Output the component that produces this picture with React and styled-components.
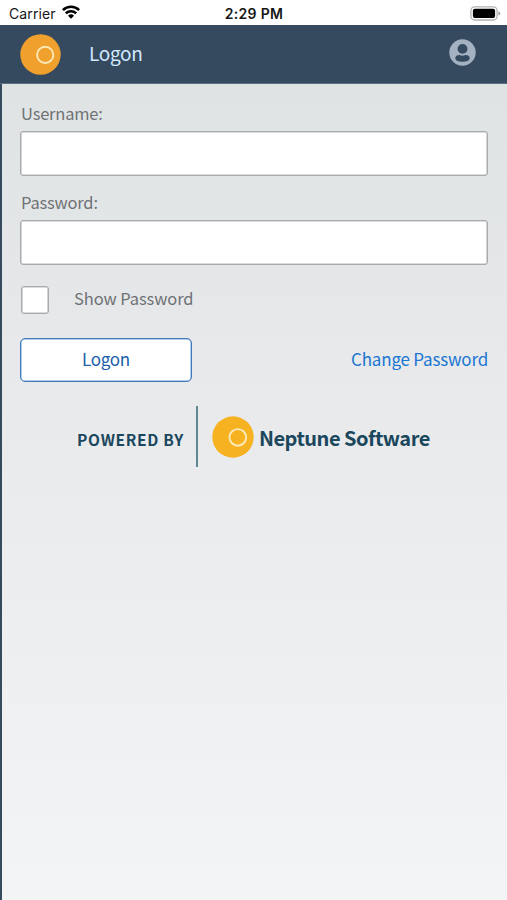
import React from "react";
import styled, { createGlobalStyle } from "styled-components";

const Logo = ({ size, color }) => (
  <svg width={size} height={size} viewBox="0 0 42 42">
    <circle cx="21" cy="21" r="20.7" fill={color} />
    <circle
      cx="25.8"
      cy="21.4"
      r="8.3"
      fill="none"
      stroke="#fdeaba"
      strokeWidth="1.9"
    />
  </svg>
);

const Wifi = () => (
  <svg width="18" height="14" viewBox="0 0 18 14">
    <g fill="none" stroke="#000" strokeWidth="2.5">
      <path d="M0.9 5.2a11.5 11.5 0 0 1 16.2 0" />
      <path d="M3.8 8.3a7.4 7.4 0 0 1 10.4 0" />
    </g>
    <path d="M9 13.8l-3-3a4.3 4.3 0 0 1 6 0z" fill="#000" />
  </svg>
);

const Battery = () => (
  <svg width="31" height="15" viewBox="0 0 31 15">
    <rect
      x="0.9"
      y="0.8"
      width="26.2"
      height="13.2"
      rx="3.8"
      fill="#fff"
      stroke="#b3b3b3"
      strokeWidth="1.3"
    />
    <rect x="2.9" y="2.7" width="22.2" height="9.4" rx="2" fill="#000" />
    <path d="M28.4 5.2v4.4q2-.7 2-2.2t-2-2.2z" fill="#a3a3a3" />
  </svg>
);

const Account = () => (
  <svg width="27" height="27" viewBox="0 0 27 27">
    <circle cx="13.5" cy="13.5" r="13.2" fill="#a3b1c0" />
    <circle cx="13.5" cy="9.9" r="4.9" fill="#354a5f" />
    <path
      d="M6.3 19.2c0-2.4 2.4-3.3 4.2-3.1 2 .8 4 .8 6 0 1.8-.2 4.2.7 4.2 3.1 0 2.3-3.6 3.6-7.2 3.6s-7.2-1.3-7.2-3.6z"
      fill="#354a5f"
    />
  </svg>
);

const App = () => {
  return (
    <>
      <GlobalStyle />
      <Screen>
        <StatusBar>
          <Carrier>
            <span>Carrier</span>
            <Wifi />
          </Carrier>
          <Clock>2:29 PM</Clock>
          <Power>
            <Battery />
          </Power>
        </StatusBar>
        <Header>
          <Logo size={41} color="#f0a02c" />
          <Title>Logon</Title>
          <Account />
        </Header>
        <Content>
          <Label htmlFor="username">Username:</Label>
          <Input id="username" type="text" />
          <Label htmlFor="password">Password:</Label>
          <Input id="password" type="password" />
          <CheckRow>
            <CheckBox type="checkbox" />
            <CheckText>Show Password</CheckText>
          </CheckRow>
          <Actions>
            <LogonButton>Logon</LogonButton>
            <ChangeLink>Change Password</ChangeLink>
          </Actions>
          <Powered>
            <PoweredText>POWERED BY</PoweredText>
            <Divider />
            <Logo size={42} color="#f6b221" />
            <Brand>Neptune Software</Brand>
          </Powered>
        </Content>
      </Screen>
    </>
  );
};

const GlobalStyle = createGlobalStyle`
  * {
    box-sizing: border-box;
  }
  body {
    margin: 0;
    overflow: hidden;
    font-family: "Noto Sans CJK JP", "Liberation Sans", sans-serif;
  }
  svg {
    display: block;
    flex: none;
  }
`;

const Screen = styled.div`
  height: 100vh;
  display: flex;
  flex-direction: column;
`;

const StatusBar = styled.div`
  height: 25px;
  padding: 2px 6px 0 9px;
  display: grid;
  grid-template-columns: 1fr auto 1fr;
  align-items: center;
  background-color: #fff;
  color: #161616;
  font-family: Inter, sans-serif;
  font-size: 14px;
`;

const Carrier = styled.div`
  display: flex;
  align-items: center;
  gap: 6px;
  letter-spacing: 0.1px;

  svg {
    margin-top: -3px;
  }
`;

const Clock = styled.div`
  margin-right: 2px;
  font-weight: 600;
  letter-spacing: 0.3px;
`;

const Power = styled.div`
  display: flex;
  justify-content: flex-end;
`;

const Header = styled.header`
  height: 59px;
  padding: 0 31px 0 20px;
  display: flex;
  align-items: center;
  background-color: #354a5f;
  border-bottom: 1px solid #5d7083;

  svg:last-child {
    margin-top: -3px;
  }
`;

const Title = styled.h1`
  flex: 1;
  margin: 0 0 0 28px;
  padding-bottom: 4px;
  color: #d1e8ff;
  font-size: 19px;
  font-weight: 400;
  letter-spacing: -0.3px;
`;

const Content = styled.main`
  flex: 1;
  padding: 18px 19px 0 18px;
  display: flex;
  flex-direction: column;
  border-left: 2px solid #354a5f;
  background: linear-gradient(#dfe3e4, #e6e8ea 30%, #f3f4f6);
`;

const Label = styled.label`
  height: 29px;
  padding-left: 1px;
  line-height: 22px;
  color: #6f7275;
  font-size: 16.5px;
  letter-spacing: -0.2px;
`;

const Input = styled.input`
  height: 45px;
  margin: 0 0 15px;
  padding: 0 12px;
  border: 1px solid #a9acae;
  border-radius: 3px;
  background-color: #fff;
  box-shadow: inset 0 0 0 0.6px #b4b7b9;
  font-size: 16px;
  outline: none;
`;

const CheckRow = styled.label`
  height: 29px;
  margin-top: 5px;
  padding-left: 1px;
  display: flex;
  align-items: center;
  gap: 25px;
  color: #6f7275;
  font-size: 16.5px;
  letter-spacing: -0.1px;
`;

const CheckText = styled.span`
  padding-bottom: 3px;
`;

const CheckBox = styled.input`
  appearance: none;
  width: 28px;
  height: 28px;
  margin: 0;
  border: 1px solid #a9abad;
  border-radius: 3px;
  background-color: #fff;
  box-shadow: inset 0 0 0 0.6px #b4b7b9;
`;

const Actions = styled.div`
  margin-top: 24px;
  display: flex;
  align-items: center;
  justify-content: space-between;
`;

const LogonButton = styled.button`
  width: 172px;
  height: 44px;
  padding-bottom: 4px;
  border: 1px solid #3f7cbf;
  border-radius: 5px;
  background-color: #fff;
  box-shadow: inset 0 0 0 0.5px #6a9bd0;
  color: #1a5fa8;
  font-family: inherit;
  font-size: 17px;
  letter-spacing: -0.3px;
`;

const ChangeLink = styled.a`
  padding-bottom: 3px;
  color: #1a76d2;
  font-size: 17px;
  letter-spacing: -0.2px;
`;

const Powered = styled.div`
  height: 61px;
  margin: 24px 0 0 57px;
  display: flex;
  align-items: center;
  color: #1b475d;
`;

const PoweredText = styled.span`
  width: 106px;
  padding-top: 4px;
  font-size: 15.5px;
  font-weight: 700;
  letter-spacing: 0.7px;
  white-space: nowrap;
`;

const Divider = styled.div`
  width: 2px;
  height: 61px;
  margin: 0 14px 0 13px;
  background-color: #618694;
`;

const Brand = styled.span`
  padding-top: 1px;
  margin-left: 5px;
  font-size: 20px;
  font-weight: 700;
  letter-spacing: -0.5px;
  white-space: nowrap;
`;

export default App;
